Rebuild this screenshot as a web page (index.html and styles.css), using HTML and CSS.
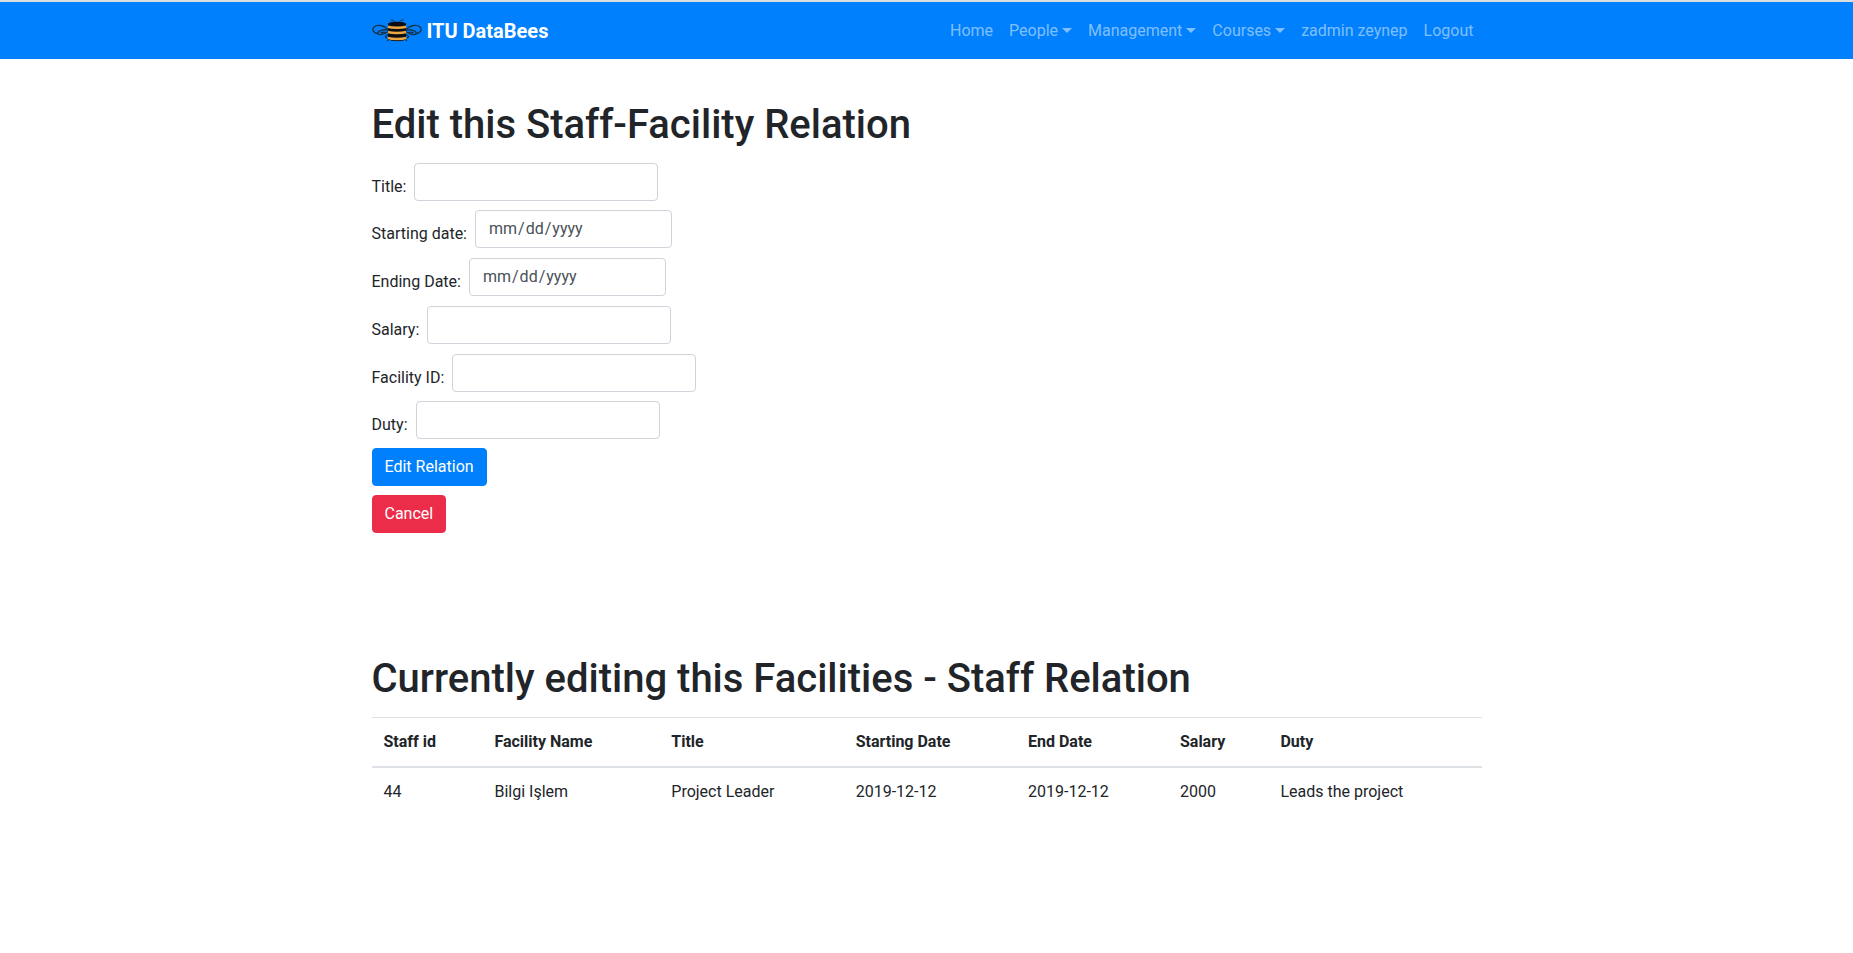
FILE: index.html
```html
<!DOCTYPE html>
<html lang="en">
<head>
<meta charset="utf-8">
<title>ITU DataBees</title>
<link rel="stylesheet" href="styles.css">
</head>
<body>
<header class="navbar">
  <div class="container navbar-inner">
    <a class="brand" href="#">
      <svg class="brand-logo" viewBox="0 0 50 24" fill="none" aria-hidden="true">
        <g stroke="#17344f" stroke-width="1.4" stroke-linecap="round">
          <path d="M15.500 10C12 6.500 5 5 2 8c-2.500 3 0 6 3 6.500"/>
          <path d="M15.500 11C11 10 6 12 5.500 14c.5 2.500 6 2 10-1M9 13.500h5"/>
          <path d="M34.500 10C38 6.500 45 5 48 8c2.500 3 0 6-3 6.500"/>
          <path d="M34.500 11c4.500-1 9.500 1 10 3-.5 2.500-6 2-10-1M41 13.500h-5"/>
          <path d="M16 15.500l-2.500 2 1 1.500M34 15.500l2.500 2-1 1.500M17 20l-1.500 1.500M33 20l1.500 1.500"/>
          <path d="M22.500 3l-1-1.500-2.500-.5M27.500 3l1-1.500 2.500-.5" stroke-width="1"/>
        </g>
        <path d="M16 5c0-3 18-3 18 0v14.500c0 3.500-18 3.500-18 0z" fill="#0c0d12"/>
        <g stroke="#e9a844" stroke-width="2.500">
          <path d="M16 7.800c4 1.200 14 1.200 18 0M16 13c4 1.200 14 1.200 18 0M16 18.800c4 1.500 14 1.500 18 0"/>
        </g>
      </svg>
      <span>ITU DataBees</span>
    </a>
    <nav class="nav-links" aria-label="Main">
      <a href="#">Home</a>
      <a class="has-menu" href="#">People</a>
      <a class="has-menu" href="#">Management</a>
      <a class="has-menu" href="#">Courses</a>
      <a href="#">zadmin zeynep</a>
      <a href="#">Logout</a>
    </nav>
  </div>
</header>
<main class="container">
  <section class="edit">
    <h1>Edit this Staff-Facility Relation</h1>
    <form>
      <div class="field"><label for="title">Title:</label><input class="control" id="title" type="text"></div>
      <div class="field spaced"><label for="start">Starting date:</label><input class="control date" id="start" type="date"></div>
      <div class="field spaced"><label for="end">Ending Date:</label><input class="control date" id="end" type="date"></div>
      <div class="field spaced"><label for="salary">Salary:</label><input class="control" id="salary" type="text"></div>
      <div class="field"><label for="facility">Facility ID:</label><input class="control" id="facility" type="text"></div>
      <div class="field"><label for="duty">Duty:</label><input class="control" id="duty" type="text"></div>
      <div class="actions">
        <button class="btn primary" type="submit">Edit Relation</button>
        <button class="btn danger" type="button">Cancel</button>
      </div>
    </form>
  </section>
  <section class="current">
    <h1>Currently editing this Facilities - Staff Relation</h1>
    <table class="table">
      <thead>
        <tr><th scope="col">Staff id</th><th scope="col">Facility Name</th><th scope="col">Title</th><th scope="col">Starting Date</th><th scope="col">End Date</th><th scope="col">Salary</th><th scope="col">Duty</th></tr>
      </thead>
      <tbody>
        <tr><td>44</td><td>Bilgi Işlem</td><td>Project Leader</td><td>2019-12-12</td><td>2019-12-12</td><td>2000</td><td>Leads the project</td></tr>
      </tbody>
    </table>
  </section>
</main>
</body>
</html>
```
FILE: styles.css
```css
*, *::before, *::after { box-sizing: border-box; }

body {
  margin: 0;
  background: #fff;
  color: #212529;
  font-family: Roboto, "Liberation Sans", sans-serif;
  font-size: 16px;
  line-height: 24px;
}

.container {
  width: 100%;
  max-width: 1140px;
  margin: 0 auto;
  padding: 0 15px;
}

.navbar {
  border-top: 2px solid #dcdfe0;
  background: #0080fc;
}

.navbar-inner {
  display: flex;
  align-items: center;
  justify-content: space-between;
  min-height: 57px;
}

.brand {
  display: flex;
  align-items: center;
  gap: 5px;
  color: #fff;
  font-size: 20px;
  font-weight: 700;
  text-decoration: none;
}

.brand-logo { width: 50px; height: 24px; }

.nav-links { display: flex; }

.nav-links a {
  padding: 8px;
  color: rgba(255, 255, 255, .5);
  text-decoration: none;
}

.has-menu::after {
  content: "";
  display: inline-block;
  margin-left: 4px;
  vertical-align: 3px;
  border-top: 5px solid;
  border-right: 5px solid transparent;
  border-left: 5px solid transparent;
}

h1 {
  margin: 0 0 14px;
  font-size: 40px;
  font-weight: 500;
  line-height: 48px;
}

.edit { padding-top: 42px; }

.field {
  display: flex;
  align-items: flex-end;
  gap: 8px;
  margin-bottom: 9px;
}

.field.spaced { margin-bottom: 10px; }

.field label { margin-bottom: 2px; }

.control {
  width: 244px;
  height: 38px;
  padding: 6px 12px;
  border: 1px solid #ced4da;
  border-radius: 4px;
  background: #fff;
  color: #495057;
  font: inherit;
}

.control.date { width: 197px; }

.control.date::-webkit-calendar-picker-indicator { display: none; }

.actions {
  display: flex;
  flex-direction: column;
  align-items: flex-start;
  gap: 9px;
}

.btn {
  padding: 6px 12px;
  border: 1px solid transparent;
  border-radius: 4px;
  color: #fff;
  font: inherit;
}

.primary { background-color: #0080fc; border-color: #0080fc; }

.danger { background-color: #eb2d49; border-color: #eb2d49; }

.current { padding-top: 122px; }

.table {
  width: 100%;
  border-collapse: collapse;
}

.table th, .table td {
  padding: 12px;
  border-top: 1px solid #dee2e6;
  text-align: left;
  vertical-align: top;
}

.table thead th { border-bottom: 2px solid #dee2e6; }
```
